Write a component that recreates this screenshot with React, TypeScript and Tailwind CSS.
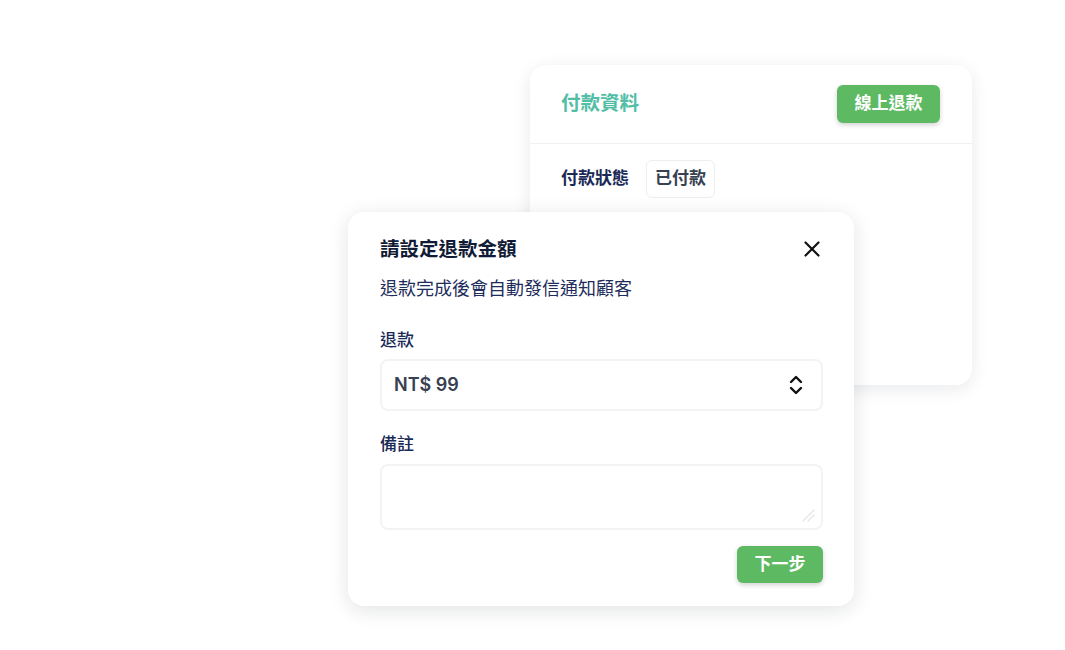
import React from "react";

const font = { fontFamily: 'Inter, "Noto Sans CJK TC", "Noto Sans", sans-serif' };

const ChevronsUpDown: React.FC = () => (
  <svg width="24" height="24" viewBox="0 0 24 24" fill="none" stroke="#111" strokeWidth="2.4" strokeLinecap="round" strokeLinejoin="round">
    <path d="m7 15 5 5 5-5" />
    <path d="m7 9 5-5 5 5" />
  </svg>
);

const CloseIcon: React.FC = () => (
  <svg width="26" height="26" viewBox="0 0 24 24" fill="none" stroke="#111" strokeWidth="2" strokeLinecap="round">
    <path d="M18 6 6 18" />
    <path d="m6 6 12 12" />
  </svg>
);

const ResizeGrip: React.FC = () => (
  <svg width="14" height="14" viewBox="0 0 14 14" fill="none" stroke="#e3e5e8" strokeWidth="1.3" strokeLinecap="round">
    <path d="M13 2 2 13" />
    <path d="M13 7 7 13" />
  </svg>
);

export default function App() {
  return (
    <div className="relative w-[1065px] h-[650px] bg-white overflow-hidden" style={font}>
      {/* 付款資料 card */}
      <div className="ml-[530px] mt-[65px] w-[442px] h-[320px] bg-white rounded-2xl shadow-[0_4px_18px_rgba(15,23,42,0.09)]">
        <div className="h-[79px] pl-[31px] pr-8 flex items-center justify-between border-b border-[#eef0f3]">
          <h2 className="text-[19.5px] font-bold text-[#52bea6]">付款資料</h2>
          <button className="h-[38px] w-[103px] rounded-md bg-[#5eb963] text-white font-bold text-[17px] shadow-[0_2px_5px_rgba(0,0,0,0.18)]">
            線上退款
          </button>
        </div>
        <div className="pl-[31px] pt-4 flex items-center gap-[17px]">
          <span className="text-[17px] font-bold text-[#1a2a57]">付款狀態</span>
          <span className="h-[38px] px-[8px] flex items-center rounded-md border border-[#eceef1] text-[17px] font-semibold text-[#374151]">
            已付款
          </span>
        </div>
      </div>

      {/* 退款 modal */}
      <div className="absolute left-[348px] top-[212px] w-[506px] h-[394px] bg-white rounded-2xl shadow-[0_4px_20px_rgba(15,23,42,0.12)] pl-8 pr-[31px] pt-[23px]">
        <div className="flex items-center justify-between">
          <h3 className="text-[19.5px] leading-7 font-bold text-[#111b35]">請設定退款金額</h3>
          <button className="-mr-[2px]">
            <CloseIcon />
          </button>
        </div>
        <p className="mt-[14px] text-[18px] leading-6 text-[#1e2d5c]">退款完成後會自動發信通知顧客</p>

        <label className="block mt-[27px] text-[17px] leading-6 font-medium text-[#1a2a57]">退款</label>
        <div className="mt-[7px] h-[52px] rounded-lg border-2 border-[#f2f3f5] flex items-center justify-between pl-[12px] pr-[13px]">
          <span className="text-lg font-semibold text-[#374151]">NT$ 99</span>
          <ChevronsUpDown />
        </div>

        <label className="block mt-[21px] text-[17px] leading-6 font-medium text-[#1a2a57]">備註</label>
        <div className="relative mt-2">
          <textarea className="block w-full h-[66px] rounded-lg border-2 border-[#f2f3f5] outline-none resize-none" />
          <div className="absolute right-[8px] bottom-[8px]">
            <ResizeGrip />
          </div>
        </div>

        <div className="mt-[16px] flex justify-end">
          <button className="h-[37px] w-[86px] rounded-md bg-[#5eb963] text-white font-bold text-[17px] shadow-[0_2px_5px_rgba(0,0,0,0.18)]">
            下一步
          </button>
        </div>
      </div>
    </div>
  );
}
